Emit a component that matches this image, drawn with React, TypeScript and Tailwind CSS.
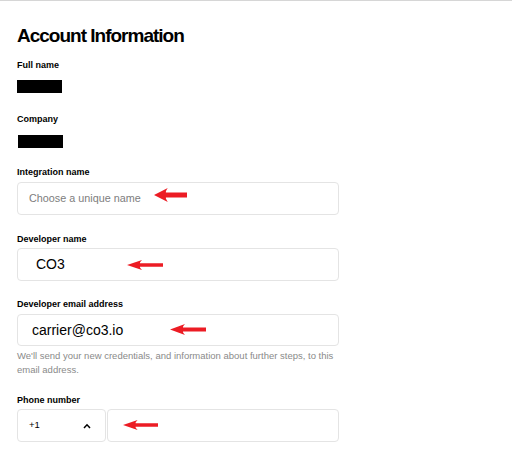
import React from "react";

function Arrow({ className }: { className: string }) {
  return (
    <svg
      viewBox="0 0 36 12"
      preserveAspectRatio="none"
      className={"absolute " + className}
    >
      <path
        d="M0 6 L15 0 Q12.5 3 13 3.8 L36 3.8 L36 8.2 L13 8.2 Q12.5 9 15 12 Z"
        fill="#ec1c24"
      />
    </svg>
  );
}

function Label({ children, className }: { children: React.ReactNode; className: string }) {
  return (
    <div className={"text-[9px] leading-[12px] font-bold text-black " + className}>
      {children}
    </div>
  );
}

export default function App() {
  return (
    <div className="w-[512px] h-[454px] bg-white border-t border-[#d6d6d6] font-['Liberation_Sans',Arial,sans-serif] overflow-hidden">
      <div className="pl-[17px] pt-[23px] flex flex-col">
        <h1 className="text-[19px] leading-[24px] h-[24px] font-bold tracking-[-1px] text-black">
          Account Information
        </h1>

        <Label className="mt-[11px]">Full name</Label>
        <div className="mt-[9px] w-[45px] h-[13px] bg-black" />

        <Label className="mt-[20px]">Company</Label>
        <div className="mt-[10px] ml-[1px] w-[45px] h-[13px] bg-black" />

        <Label className="mt-[18px]">Integration name</Label>
        <div className="relative mt-[4px] w-[322px] h-[33px] border border-[#e4e4e4] rounded-[4px] flex items-center pl-[11px]">
          <span className="text-[10.8px] text-[#7d7d7d]">Choose a unique name</span>
          <Arrow className="left-[136px] top-[5px] w-[33px] h-[14px]" />
        </div>

        <Label className="mt-[18px]">Developer name</Label>
        <div className="relative mt-[3px] w-[322px] h-[33px] border border-[#e4e4e4] rounded-[4px] flex items-center pl-[18px]">
          <span className="text-[14px] text-black">CO3</span>
          <Arrow className="left-[109px] top-[11px] w-[36px] h-[10px]" />
        </div>

        <Label className="mt-[17px]">Developer email address</Label>
        <div className="relative mt-[4px] w-[322px] h-[32px] border border-[#e4e4e4] rounded-[4px] flex items-center pl-[14px]">
          <span className="text-[14px] text-black">carrier@co3.io</span>
          <Arrow className="left-[152px] top-[9px] w-[36px] h-[11px]" />
        </div>

        <p className="mt-[3px] w-[322px] text-[9.5px] leading-[14px] text-[#8a8a8a]">
          We'll send your new credentials, and information about further steps, to this email address.
        </p>

        <Label className="mt-[17px]">Phone number</Label>
        <div className="mt-[3px] flex gap-[1px]">
          <div className="w-[89px] h-[33px] border border-[#e4e4e4] rounded-[4px] flex items-center justify-between pl-[11px] pr-[14px]">
            <span className="text-[9.5px] text-black">+1</span>
            <svg viewBox="0 0 8 6" className="w-[8px] h-[6px]">
              <path d="M1 5 L4 1.8 L7 5" fill="none" stroke="#000" strokeWidth="1.5" />
            </svg>
          </div>
          <div className="relative w-[232px] h-[33px] border border-[#e4e4e4] rounded-[4px]">
            <Arrow className="left-[15px] top-[10px] w-[35px] h-[10px]" />
          </div>
        </div>
      </div>
    </div>
  );
}
